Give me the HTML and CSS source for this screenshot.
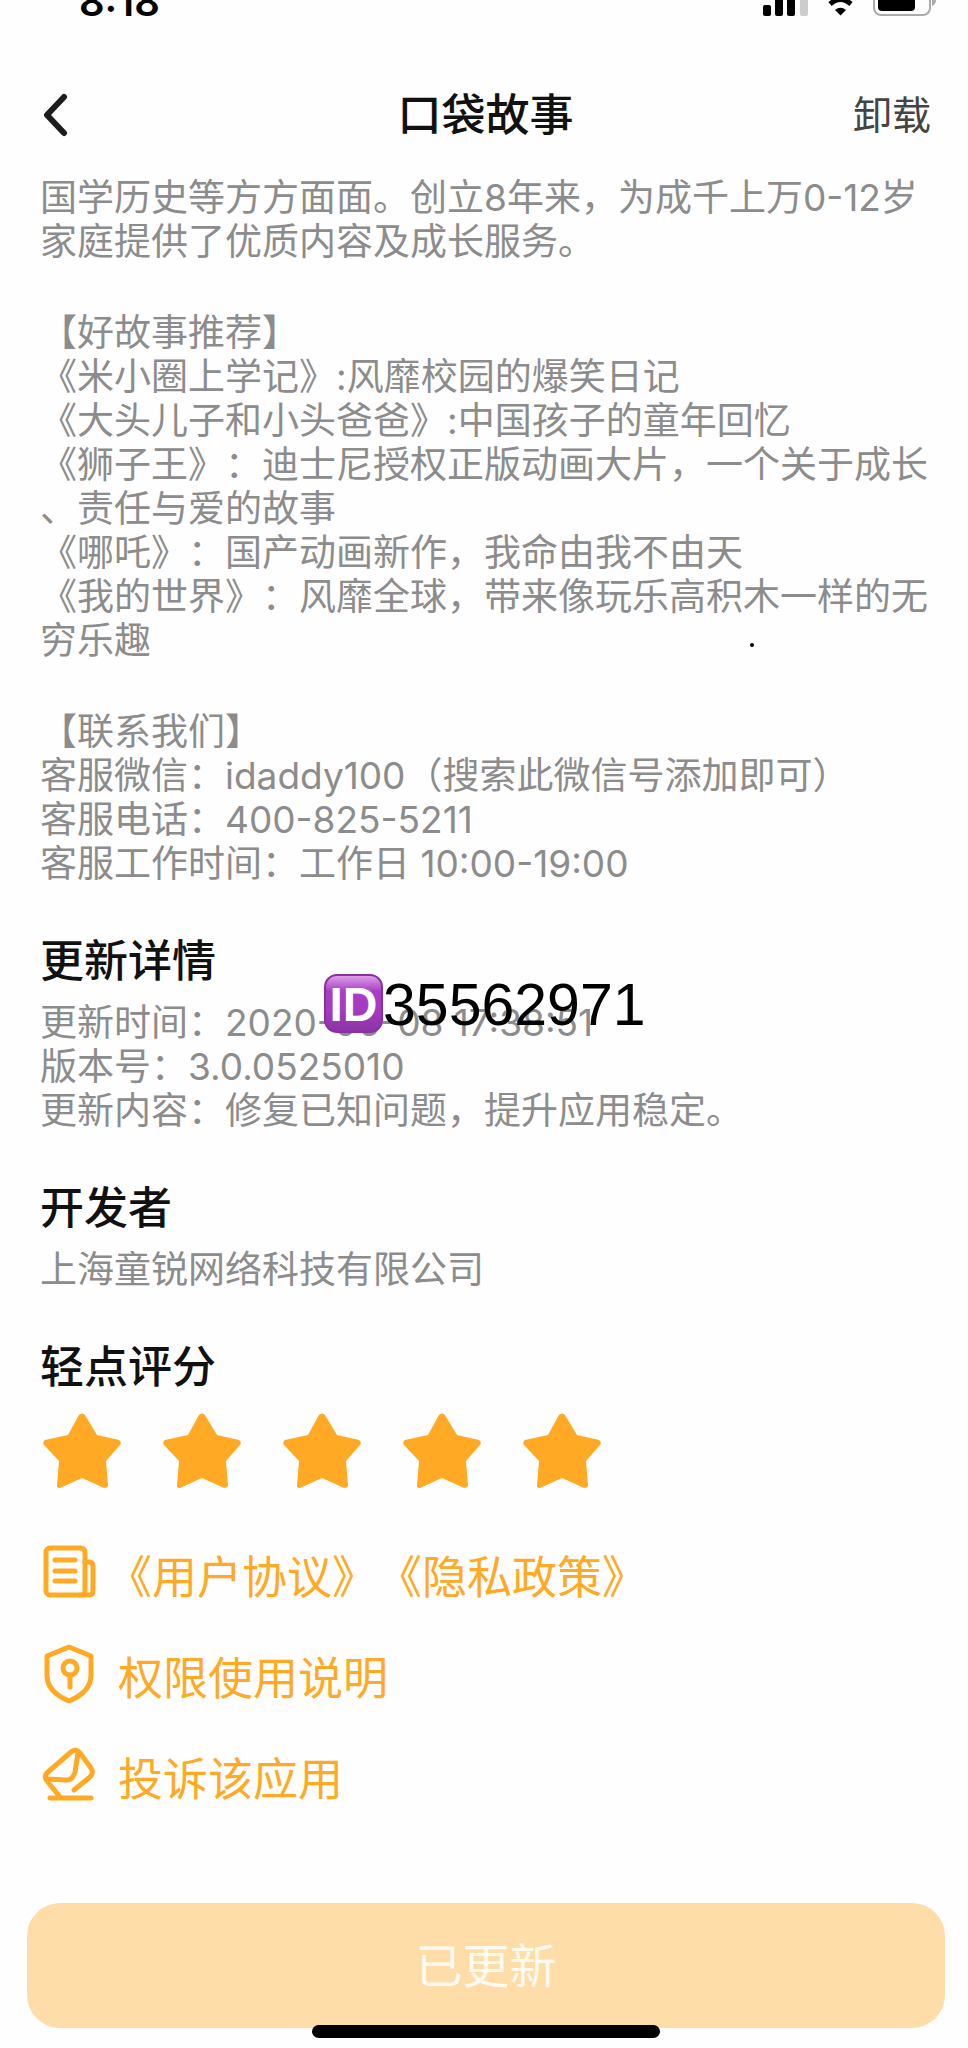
FILE: index.html
```html
<!DOCTYPE html>
<html lang="zh-CN">
<head>
<meta charset="utf-8">
<meta name="viewport" content="width=device-width, initial-scale=1">
<title>口袋故事</title>
<link rel="stylesheet" href="styles.css">
</head>
<body>
<div class="page">
  <div class="status">
    <span class="status-time">8:18</span>
    <svg class="status-icons" viewBox="0 0 180 22" aria-hidden="true">
      <rect x="3" y="5" width="8" height="11" rx="2"/>
      <rect x="15" y="-2" width="8" height="18" rx="2"/>
      <rect x="27" y="-8" width="8" height="24" rx="2"/>
      <rect x="40" y="-14" width="8" height="30" rx="2" fill="#ccc"/>
      <path d="M80.500 15.500L75 10Q80.500 5.500 86 10Z"/>
      <path d="M70 4Q80.500 -5 91 4" fill="none" stroke="#000" stroke-width="5"/>
      <rect x="114" y="-14" width="56" height="29" rx="7" fill="none" stroke="#aaa" stroke-width="2"/>
      <rect x="118" y="-10" width="37" height="21" rx="4"/>
      <path d="M172 -6q4 2 4 6q0 4 -4 6z" fill="#aaa"/>
    </svg>
  </div>

  <header class="header">
    <button class="back" type="button" aria-label="返回">
      <svg class="back-icon" viewBox="0 0 28 44" aria-hidden="true"><path d="M24 4L7 22L24 40"/></svg>
    </button>
    <h1 class="title">口袋故事</h1>
    <button class="uninstall" type="button">卸载</button>
  </header>

  <main class="content">
    <section class="description">
      <p>国学历史等方方面面。创立8年来，为成千上万0-12岁<br>家庭提供了优质内容及成长服务。</p>
      <p>【好故事推荐】<br>《米小圈上学记》:风靡校园的爆笑日记<br>《大头儿子和小头爸爸》:中国孩子的童年回忆<br>《狮子王》：迪士尼授权正版动画大片，一个关于成长<br>、责任与爱的故事<br>《哪吒》：国产动画新作，我命由我不由天<br>《我的世界》：风靡全球，带来像玩乐高积木一样的无<br>穷乐趣</p>
      <p>【联系我们】<br>客服微信：idaddy100（搜索此微信号添加即可）<br>客服电话：400-825-5211<br>客服工作时间：工作日 10:00-19:00</p>
      <span class="dot"></span>
    </section>

    <section class="section">
      <h2 class="heading">更新详情</h2>
      <p>更新时间：2020-06-08 17:38:51<br>版本号：3.0.0525010<br>更新内容：修复已知问题，提升应用稳定。</p>
      <div class="watermark"><span class="id-badge">ID</span><span>35562971</span></div>
    </section>

    <section class="section">
      <h2 class="heading">开发者</h2>
      <p>上海童锐网络科技有限公司</p>
    </section>

    <section class="section">
      <h2 class="heading">轻点评分</h2>
      <div class="stars">
        <button class="star" type="button" aria-label="1 星"><svg viewBox="0 0 78 75"><use href="#star"/></svg></button>
        <button class="star" type="button" aria-label="2 星"><svg viewBox="0 0 78 75"><use href="#star"/></svg></button>
        <button class="star" type="button" aria-label="3 星"><svg viewBox="0 0 78 75"><use href="#star"/></svg></button>
        <button class="star" type="button" aria-label="4 星"><svg viewBox="0 0 78 75"><use href="#star"/></svg></button>
        <button class="star" type="button" aria-label="5 星"><svg viewBox="0 0 78 75"><use href="#star"/></svg></button>
      </div>
    </section>

    <nav class="links">
      <div class="link-row">
        <svg class="link-icon" viewBox="0 0 60 60" aria-hidden="true">
          <rect x="6" y="6" width="39" height="47" rx="4"/>
          <path d="M45 20h4q4 0 4 4v25q0 4-4 4h-9M15 18h20M15 29h20M15 39h20"/>
        </svg>
        <div class="agreements"><a href="#agreement">《用户协议》</a><a href="#privacy">《隐私政策》</a></div>
      </div>
      <div class="link-row">
        <svg class="link-icon" viewBox="0 0 60 60" aria-hidden="true">
          <path d="M29 4L51 13V32Q51 49 29 58Q7 49 7 32V13Z"/>
          <circle cx="30" cy="25" r="7"/>
          <path d="M30 32V44"/>
        </svg>
        <a href="#permissions">权限使用说明</a>
      </div>
      <div class="link-row">
        <svg class="link-icon" viewBox="0 0 60 60" aria-hidden="true">
          <path d="M20 53L7 37Q3 32 8 28L31 8Q36 4 40 9L51 24Q54 29 50 33L34 46"/>
          <path d="M7 35L26 36Q33 36 35 28L38 9M10 54H51"/>
        </svg>
        <a href="#report">投诉该应用</a>
      </div>
    </nav>
  </main>

  <footer class="footer">
    <button class="updated" type="button">已更新</button>
    <span class="home-bar"></span>
  </footer>
</div>
<svg width="0" height="0" class="defs" aria-hidden="true">
  <defs><path id="star" d="M36 2Q39 -1 42 2L54 22L76 27Q79 29 77 32L63 48L65 73Q64 75 61 75L39 65L17 75Q14 75 14 73L16 48L1 32Q-1 29 2 27L25 22Z"/></defs>
</svg>
</body>
</html>
```

FILE: styles.css
```css
* {
  box-sizing: border-box;
}

body {
  margin: 0;
  background: #fefefe;
  color: #8c8c8c;
  font-family: Inter, "Noto Sans CJK SC", sans-serif;
  font-size: 37px;
  line-height: 44px;
  text-spacing-trim: space-all;
}

p, h1, h2 {
  margin: 0;
}

button {
  padding: 0;
  border: 0;
  background: none;
  font: inherit;
  color: inherit;
}

.defs {
  display: block;
  position: absolute;
}

.page {
  display: flex;
  flex-direction: column;
  min-height: 100vh;
}

.status {
  display: flex;
  align-items: flex-end;
  justify-content: space-between;
  height: 22px;
  padding: 0 28px 0 79px;
  overflow: hidden;
  color: #000;
}

.status-time {
  font-size: 40px;
  font-weight: 600;
  line-height: 40px;
}

.status-icons {
  width: 180px;
  height: 22px;
}

.header {
  display: grid;
  grid-template-columns: 1fr auto 1fr;
  align-items: center;
  padding: 65px 37px 33px 40px;
  line-height: 56px;
}

.back {
  justify-self: start;
  height: 44px;
}

.back-icon {
  display: block;
  width: 28px;
  height: 44px;
  fill: none;
  stroke: #1c1c1c;
  stroke-width: 6;
  stroke-linecap: round;
  stroke-linejoin: round;
}

.title {
  color: #111;
  font-size: 44px;
  font-weight: 500;
}

.uninstall {
  justify-self: end;
  color: #444;
  font-size: 39px;
}

.content {
  padding: 0 35px 0 40px;
}

.description {
  position: relative;
  display: grid;
  gap: 47px;
}

.dot {
  position: absolute;
  top: 467px;
  right: 179px;
  width: 4px;
  height: 4px;
  border-radius: 50%;
  background: #000;
}

.section {
  position: relative;
  margin-top: 47px;
}

.heading {
  margin-bottom: 12px;
  color: #111;
  font-size: 44px;
  font-weight: 500;
  line-height: 56px;
}

.watermark {
  position: absolute;
  top: 41px;
  left: 284px;
  display: flex;
  align-items: flex-start;
  color: #000;
  font-family: "Liberation Sans", Arial, sans-serif;
  font-size: 59px;
  line-height: 62px;
}

.id-badge {
  width: 59px;
  height: 59px;
  border: 2px solid #8a2fa0;
  border-radius: 13px;
  background: linear-gradient(#dba0e6, #a93cc6 28%, #a63bc2 60%, #8c34a6);
  color: #fff;
  font-size: 48px;
  font-weight: 700;
  line-height: 57px;
  text-align: center;
}

.stars {
  display: flex;
  gap: 42px;
  padding: 6px 3px 0;
}

.star {
  width: 78px;
  height: 75px;
}

.star svg {
  display: block;
  fill: #ffa924;
}

.links {
  display: grid;
  gap: 41px;
  margin-top: 60px;
  color: #ffa924;
  font-size: 45px;
  line-height: 60px;
}

.link-row {
  display: flex;
  gap: 18px;
}

.link-row a {
  color: inherit;
  text-decoration: none;
}

.agreements {
  display: flex;
  margin-left: -11px;
}

.link-icon {
  width: 60px;
  height: 60px;
  margin-top: -6px;
  fill: none;
  stroke: #ffa924;
  stroke-width: 5;
  stroke-linecap: round;
  stroke-linejoin: round;
}

.footer {
  position: relative;
  margin-top: auto;
  padding: 40px 23px 20px 27px;
}

.updated {
  display: block;
  width: 100%;
  height: 125px;
  border-radius: 33px;
  background: #ffdda8;
  color: #fffaf0;
  font-size: 47px;
}

.home-bar {
  position: absolute;
  right: 0;
  bottom: 10px;
  left: 4px;
  width: 36%;
  height: 13px;
  margin: 0 auto;
  border-radius: 7px;
  background: #000;
}
```
